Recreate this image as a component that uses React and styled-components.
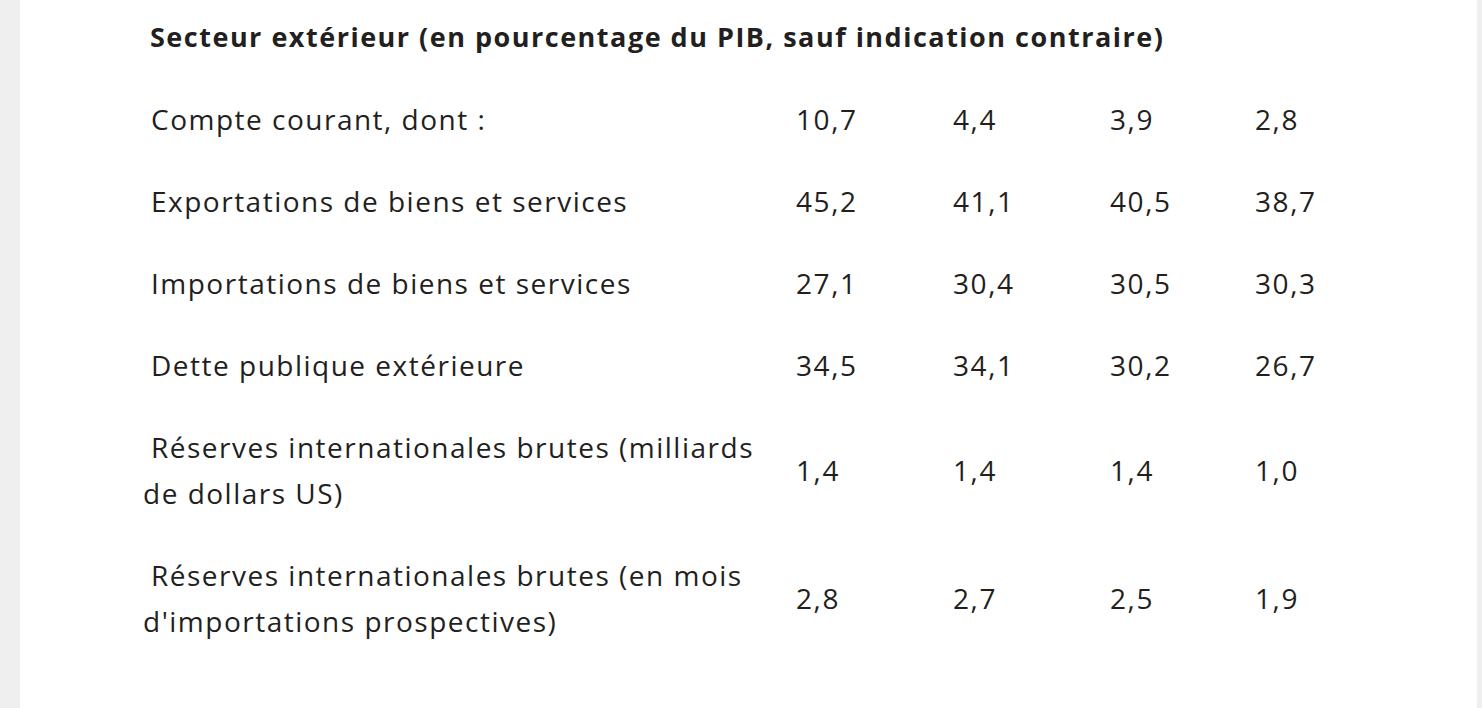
import React from "react";
import styled, { createGlobalStyle } from "styled-components";

const GlobalStyle = createGlobalStyle`
  html, body {
    margin: 0;
    padding: 0;
    background: #efefef;
  }
  body {
    font-family: "Open Sans", "Liberation Sans", sans-serif;
    color: #231f20;
  }
`;

const Page = styled.div`
  margin: 0 5px 0 20px;
  background: #ffffff;
  min-height: 100vh;
  padding-left: 123px;
  overflow: hidden;
`;

const Table = styled.table`
  border-collapse: collapse;
  margin-top: -4px;
  table-layout: fixed;
`;

const HeadCell = styled.th`
  text-align: left;
  font-weight: 700;
  font-size: 27px;
  letter-spacing: 1.5px;
  line-height: 46px;
  padding: 18px 0;
  text-indent: 7px;
  white-space: nowrap;
`;

const Label = styled.td`
  width: 627px;
  padding: 18px 26px 18px 0;
  font-size: 28px;
  letter-spacing: 1.5px;
  line-height: 46px;
  text-indent: 8px;
  vertical-align: middle;
`;

const Value = styled.td`
  width: ${(p) => p.$w}px;
  padding: 18px 0;
  font-size: 28px;
  letter-spacing: 1.6px;
  line-height: 46px;
  vertical-align: middle;
`;

const widths = [157, 157, 145, 145];

const rows = [
  ["Compte courant, dont :", "10,7", "4,4", "3,9", "2,8"],
  ["Exportations de biens et services", "45,2", "41,1", "40,5", "38,7"],
  ["Importations de biens et services", "27,1", "30,4", "30,5", "30,3"],
  ["Dette publique extérieure", "34,5", "34,1", "30,2", "26,7"],
  ["Réserves internationales brutes (milliards de dollars US)", "1,4", "1,4", "1,4", "1,0"],
  ["Réserves internationales brutes (en mois d'importations prospectives)", "2,8", "2,7", "2,5", "1,9"],
];

export default function App() {
  return (
    <>
      <GlobalStyle />
      <Page>
        <Table>
          <thead>
            <tr>
              <HeadCell colSpan={5}>
                Secteur extérieur (en pourcentage du PIB, sauf indication contraire)
              </HeadCell>
            </tr>
          </thead>
          <tbody>
            {rows.map(([label, ...vals]) => (
              <tr key={label}>
                <Label>{label}</Label>
                {vals.map((v, i) => (
                  <Value key={i} $w={widths[i]}>{v}</Value>
                ))}
              </tr>
            ))}
          </tbody>
        </Table>
      </Page>
    </>
  );
}
